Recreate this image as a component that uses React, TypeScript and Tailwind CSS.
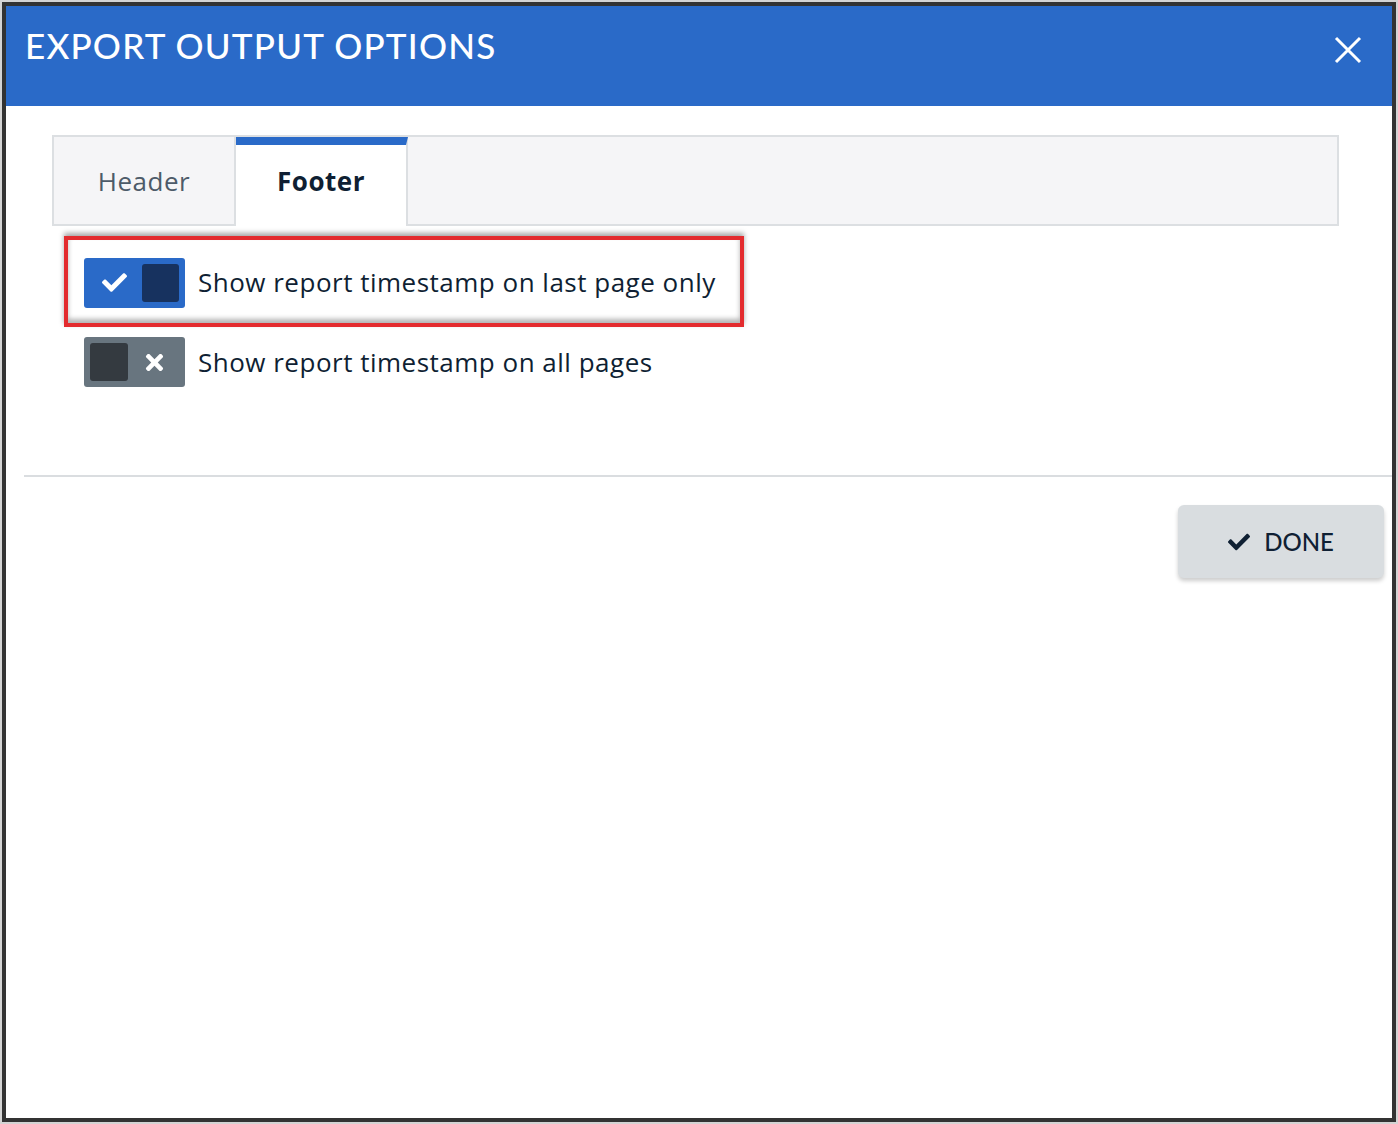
import { FaCheck, FaTimes } from 'react-icons/fa';

const font = { fontFamily: 'Lato, "Open Sans", sans-serif' };
const body = { fontFamily: '"Open Sans", Lato, sans-serif' };

const Toggle = ({ on }: { on: boolean }) => (
  <div
    className={`w-[101px] h-[50px] rounded-[3px] flex items-center justify-between px-[6px] ${
      on ? 'bg-[#2a6ac8]' : 'bg-[#68757f]'
    }`}
  >
    {on ? (
      <>
        <FaCheck className="text-white ml-[12px]" size={25} />
        <div className="w-[37px] h-[38px] rounded-[3px] bg-[#17325f]" />
      </>
    ) : (
      <>
        <div className="w-[38px] h-[38px] rounded-[3px] bg-[#343a40]" />
        <FaTimes className="text-white mr-[12px]" size={25} />
      </>
    )}
  </div>
);

export default function App() {
  return (
    <div className="w-[1398px] h-[1124px] bg-[#d4d4d4] p-[2px]" style={font}>
      <div className="w-[1394px] h-[1120px] border-4 border-[#333333] bg-white flex flex-col">
        <div className="h-[100px] bg-[#2a6ac8] flex items-start justify-between pl-[19px] pr-[30px]">
          <h1 className="text-white text-[35px] font-medium tracking-[1.2px] mt-[22px] leading-none">
            EXPORT OUTPUT OPTIONS
          </h1>
          <svg width="28" height="28" viewBox="0 0 28 28" className="mt-[30px]">
            <path d="M2 2 L26 26 M26 2 L2 26" stroke="white" strokeWidth="3" />
          </svg>
        </div>

        <div className="pt-[29px] pl-[46px] pr-[53px] tracking-[0.5px]" style={body}>
          <div className="flex h-[91px] bg-[#f5f5f7] border-2 border-[#dcdfe2] border-b-0">
            <div className="w-[182px] flex items-center justify-center border-r-2 border-b-2 border-[#dcdfe2] text-[26px] text-[#4d5b69] pt-[2px]">
              Header
            </div>
            <div className="w-[172px] flex items-center justify-center bg-white border-t-[8px] border-[#2a6ac8] border-r-2 border-r-[#dcdfe2] text-[26px] font-bold text-[#0f1f33] pb-[8px]">
              Footer
            </div>
            <div className="flex-1 border-b-2 border-[#dcdfe2]" />
          </div>

          <div className="mt-[10px] ml-[12px] w-[680px] h-[91px] border-4 border-[#e32b2e] shadow-[0_-3px_5px_rgba(0,0,0,0.35),inset_0_-4px_5px_rgba(0,0,0,0.3)] flex items-center pl-[16px] pt-[2px] gap-[13px]">
            <Toggle on />
            <span className="text-[26px] text-[#0f1f33]">Show report timestamp on last page only</span>
          </div>

          <div className="mt-[10px] ml-[32px] flex items-center gap-[13px]">
            <Toggle on={false} />
            <span className="text-[26px] text-[#0f1f33]">Show report timestamp on all pages</span>
          </div>
        </div>

        <div className="mt-[88px] ml-[18px] h-[2px] bg-[#dadde0]" />

        <div className="flex justify-end pr-[8px] mt-[28px]">
          <button className="w-[206px] h-[73px] rounded-[6px] bg-[#d9dde0] shadow-[0_3px_4px_rgba(0,0,0,0.2)] flex items-center justify-center gap-[14px] text-[24px] text-[#0f2033] font-medium">
            <FaCheck size={22} />
            DONE
          </button>
        </div>
      </div>
    </div>
  );
}
